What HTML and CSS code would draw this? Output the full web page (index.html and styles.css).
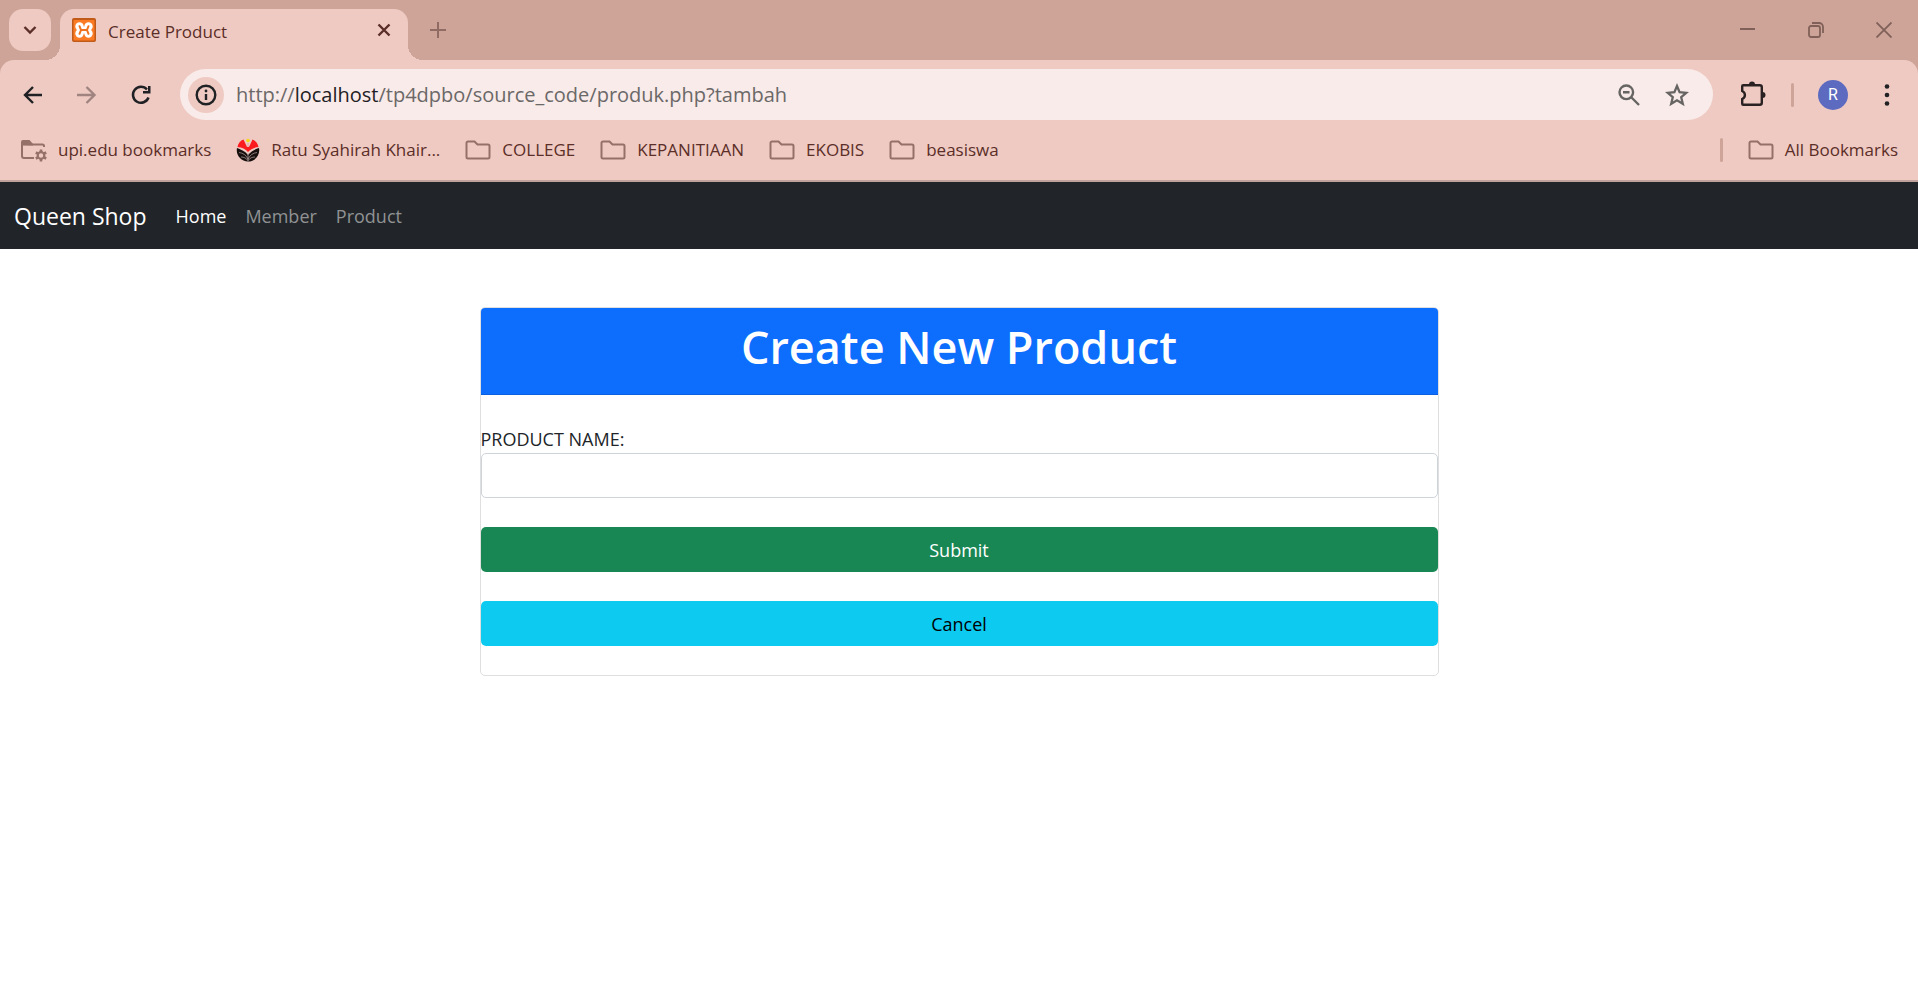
FILE: index.html
```html
<!DOCTYPE html>
<html lang="en">
<head>
<meta charset="utf-8">
<title>Create Product</title>
<link rel="stylesheet" href="styles.css">
</head>
<body>
<header class="browser">
  <div class="tabstrip">
    <button class="tab-search" aria-label="Search tabs"><svg width="14" height="10" viewBox="0 0 14 10"><path d="M1.500 2L7 7.500 12.500 2" fill="none" stroke="#5b2e28" stroke-width="2.400"/></svg></button>
    <div class="tab">
      <svg width="24" height="24" viewBox="0 0 24 24"><rect width="24" height="24" rx="2" fill="#c05a16"/><rect x="1.500" y="2" width="21" height="20.500" rx="1" fill="#fb7a24"/><g fill="#fff"><circle cx="7.500" cy="8.500" r="4.200"/><circle cx="16.500" cy="8.500" r="4.200"/><circle cx="7.500" cy="15.500" r="4.200"/><circle cx="16.500" cy="15.500" r="4.200"/><path d="M5 8.500h14v7H5Z"/></g><path d="M7.500 8.200L9 12l-1.500 3.800M16.500 8.200L15 12l1.500 3.800M9 12h6" fill="none" stroke="#f0741f" stroke-width="2" stroke-linecap="round"/></svg>
      <span class="tab-title">Create Product</span>
      <button aria-label="Close tab"><svg width="14" height="14" viewBox="0 0 14 14"><path d="M1.500 1.500l11 11M12.500 1.500l-11 11" stroke="#5b2e28" stroke-width="2.400"/></svg></button>
    </div>
    <button class="new-tab" aria-label="New tab"><svg width="16" height="16" viewBox="0 0 16 16"><path d="M8 0v16M0 8h16" stroke="#8f6b63" stroke-width="2"/></svg></button>
    <div class="window-controls">
      <button aria-label="Minimize"><svg width="16" height="16" viewBox="0 0 16 16"><path d="M0 7h15" stroke="#806058" stroke-width="2"/></svg></button>
      <button aria-label="Restore"><svg width="16" height="16" viewBox="0 0 16 16"><g fill="none" stroke="#806058" stroke-width="1.800"><rect x="1" y="4" width="11" height="11" rx="2"/><path d="M4 1h7a4 4 0 0 1 4 4v6"/></g></svg></button>
      <button aria-label="Close"><svg width="16" height="16" viewBox="0 0 16 16"><path d="M.5.5l15 15M15.500.5l-15 15" stroke="#806058" stroke-width="1.800"/></svg></button>
    </div>
  </div>
  <div class="toolbar">
    <button class="tool" aria-label="Back"><svg width="20" height="18" viewBox="0 0 20 18"><path d="M19 9H2M10 1L2 9l8 8" fill="none" stroke="#1f2124" stroke-width="2.400"/></svg></button>
    <button class="tool" aria-label="Forward"><svg width="20" height="18" viewBox="0 0 20 18"><path d="M0 9h17M9.500 1l8 8-8 8" fill="none" stroke="#a08480" stroke-width="2.400"/></svg></button>
    <button class="tool" aria-label="Reload"><svg width="20" height="20" viewBox="0 0 20 20"><path d="M17.500 12.500A8 8 0 1 1 16 4.500" fill="none" stroke="#1f2124" stroke-width="2.500"/><path d="M19.500 1v7.500h-7.500V6H17V1Z" fill="#1f2124"/></svg></button>
    <div class="omnibox">
      <button class="site-info" aria-label="View site information"><svg width="22" height="22" viewBox="0 0 22 22"><circle cx="11" cy="11" r="9.300" fill="none" stroke="#1f2124" stroke-width="2.400"/><path d="M11 10v6" stroke="#1f2124" stroke-width="2.400"/><circle cx="11" cy="7" r="1.400" fill="#1f2124"/></svg></button>
      <span class="url">http://<span class="host">localhost</span>/tp4dpbo/source_code/produk.php?tambah</span>
      <button class="omni-action" aria-label="Zoom"><svg width="22" height="22" viewBox="0 0 22 22"><g fill="none" stroke="#666563" stroke-width="2.400"><circle cx="8.300" cy="8.300" r="6.800"/><path d="M13 13l8 8M5 8.300h6.500"/></g></svg></button>
      <button class="omni-action" aria-label="Bookmark this tab"><svg width="24" height="24" viewBox="0 0 24 24"><path d="M12 3l2.600 6.200 6.700.6-5.100 4.400 1.600 6.600L12 17.300l-5.800 3.500 1.600-6.600-5.100-4.400 6.700-.6Z" fill="none" stroke="#666563" stroke-width="2.300"/></svg></button>
    </div>
    <button class="tool extensions" aria-label="Extensions"><svg width="28" height="28" viewBox="0 0 28 28"><path d="M5.200 4.200h16.600a2 2 0 0 1 2 2v15.600a2 2 0 0 1-2 2H5.200a1 1 0 0 1-1-1V18c3.600-1.600 3.600-6.400 0-8V5.200a1 1 0 0 1 1-1Z" fill="none" stroke="#2a2222" stroke-width="2.400"/><path d="M11 3.500a3 3 0 0 1 6 0ZM24.500 11a3 3 0 0 1 0 6Z" fill="#2a2222"/></svg></button>
    <span class="divider"></span>
    <button class="avatar" aria-label="Profile">R</button>
    <button class="menu" aria-label="Menu"><svg width="6" height="22" viewBox="0 0 6 22"><g fill="#1f2124"><circle cx="3" cy="2.500" r="2.300"/><circle cx="3" cy="11" r="2.300"/><circle cx="3" cy="19.500" r="2.300"/></g></svg></button>
  </div>
  <nav class="bookmarks" aria-label="Bookmarks">
    <a href="#"><svg width="27" height="24" viewBox="0 0 27 24"><path d="M14 20H4a2 2 0 0 1-2-2V5M24 9V8a1.500 1.500 0 0 0-1.500-1.500H2" fill="none" stroke="#947069" stroke-width="2"/><path d="M1 7V4a2 2 0 0 1 2-2h6.500l3.500 4v1.500Z" fill="#947069"/><circle cx="21" cy="17.500" r="3.300" fill="none" stroke="#947069" stroke-width="2.200"/><path d="M21 11.500v2.500M21 21v2.500M15.800 14.500l2.200 1.200M24 19.300l2.200 1.200M26.200 14.500L24 15.700M18 19.300l-2.200 1.200" stroke="#947069" stroke-width="2.600"/></svg>upi.edu bookmarks</a>
    <a href="#"><svg width="24" height="24" viewBox="0 0 24 24"><path d="M1 10C4 11 9 13 12 17c3-4 8-6 11-7 1.500 7-4 13.500-11 13.500S-.5 17 1 10Z" fill="#17100f"/><path d="M1.500 9C2 5.500 4.500 2.500 7.500 1.500L11 9h2l3.500-7.500c3 1 5.500 4 6 7.500C18 9.500 14.500 11 12 14 9.500 11 6 9.500 1.500 9Z" fill="#fb1a1e"/><path d="M12 5v4" stroke="#e8b7b0" stroke-width="2"/><circle cx="12" cy="2.500" r="1.800" fill="#f5d913"/><path d="M3 14.500c4 .5 7 2.500 9 6.500 2-4 5-6 9-6.500M5 19c3 0 5 1 7 3.500 2-2.500 4-3.500 7-3.500M12 15v8" fill="none" stroke="#b9a5a2" stroke-width=".7"/></svg>Ratu Syahirah Khair...</a>
    <a href="#"><svg width="26" height="20" viewBox="0 0 26 20"><path id="folder" d="M3 1.500h6.500l3 3H23A1.500 1.500 0 0 1 24.500 6v11a1.500 1.500 0 0 1-1.500 1.500H3A1.500 1.500 0 0 1 1.500 17V3A1.500 1.500 0 0 1 3 1.500Z" fill="none" stroke="#947069" stroke-width="2"/></svg>COLLEGE</a>
    <a href="#"><svg width="26" height="20" viewBox="0 0 26 20"><use href="#folder"/></svg>KEPANITIAAN</a>
    <a href="#"><svg width="26" height="20" viewBox="0 0 26 20"><use href="#folder"/></svg>EKOBIS</a>
    <a href="#"><svg width="26" height="20" viewBox="0 0 26 20"><use href="#folder"/></svg>beasiswa</a>
    <span class="divider push"></span>
    <a href="#"><svg width="26" height="20" viewBox="0 0 26 20"><use href="#folder"/></svg>All Bookmarks</a>
  </nav>
</header>
<nav class="navbar" aria-label="Main">
  <a class="brand" href="#">Queen Shop</a>
  <a class="active" href="#">Home</a>
  <a href="#">Member</a>
  <a href="#">Product</a>
</nav>
<main>
  <form class="card">
    <h1 class="card-header">Create New Product</h1>
    <label for="name">PRODUCT NAME:</label>
    <input class="field" id="name" type="text">
    <button class="btn submit" type="button">Submit</button>
    <button class="btn cancel" type="button">Cancel</button>
  </form>
</main>
</body>
</html>
```

FILE: styles.css
```css
* { box-sizing: border-box; }
body { margin: 0; background: #fff; color: #212529; font: 18px/28px "Open Sans", sans-serif; }
button, input { font: inherit; color: inherit; border: 0; padding: 0; background: none; }
a { color: inherit; text-decoration: none; }
svg { display: block; flex: none; }

/* Browser frame */
.browser { background: #cda497; color: #5b2e28; border-bottom: 2px solid #c1a19b; }
.tabstrip { display: flex; height: 60px; padding-top: 9px; }
.tab-search { display: grid; place-items: center; width: 42px; height: 42px; margin: 0 9px; border-radius: 14px; background: #efcac2; }
.tab { position: relative; display: flex; align-items: center; width: 348px; padding: 0 17px 9px 12px; border-radius: 14px 14px 0 0; background: #efcac2; }
.tab::before, .tab::after { content: ""; position: absolute; bottom: 0; width: 15px; height: 15px; }
.tab::before { right: 100%; background: radial-gradient(circle at 0 0, transparent 15px, #efcac2 15px); }
.tab::after { left: 100%; background: radial-gradient(circle at 100% 0, transparent 15px, #efcac2 15px); }
.tab-title { flex: 1; margin-left: 12px; padding-top: 3px; font-size: 17px; }
.new-tab { display: grid; place-items: center; width: 60px; height: 42px; }
.window-controls { display: flex; height: 42px; margin-left: auto; }
.window-controls button { display: grid; place-items: center; width: 68px; }

.toolbar { display: flex; align-items: center; height: 60px; padding: 9px 16px 0 6px; border-radius: 14px 14px 0 0; background: #efcac2; }
.tool { display: grid; place-items: center; width: 54px; height: 48px; }
.omnibox { flex: 1; display: flex; align-items: center; height: 51px; margin: 0 12px; padding: 0 12px 0 8px; border-radius: 26px; background: #f9ebe9; }
.site-info { display: grid; place-items: center; width: 36px; height: 36px; border-radius: 50%; background: #efcac2; }
.url { flex: 1; margin-left: 12px; font-size: 20px; color: #6b6868; }
.host { color: #1f2124; }
.omni-action { display: grid; place-items: center; width: 48px; height: 48px; }
.divider { width: 3px; height: 24px; border-radius: 2px; background: #cda497; }
.toolbar .divider { margin: 0 24px 0 12px; }
.avatar { width: 30px; height: 30px; border-radius: 50%; background: #5c6bc0; color: #fff; font: 16px/30px Roboto, sans-serif; }
.menu { display: grid; place-items: center; width: 30px; height: 48px; margin-left: 24px; }

.bookmarks { display: flex; align-items: center; gap: 25px; height: 60px; padding: 0 20px; background: #efcac2; font-size: 17px; }
.bookmarks a { display: flex; align-items: center; gap: 11px; }
.push { margin-left: auto; }

/* Shop page */
.navbar { display: flex; align-items: center; gap: 19px; height: 67px; padding: 0 14px; background: #212529; color: #909294; }
.brand { margin-right: 10px; font-size: 23px; color: #fff; }
.active { color: #fff; }
.card { display: flex; flex-direction: column; width: 50%; margin: 58px auto; border: 1px solid #dfdfdf; border-radius: 5px; }
.card-header { margin: 0 0 30px; padding: 6px 10px 14px; border-bottom: 1px solid #0b60df; border-radius: 4px 4px 0 0; text-align: center; color: #fff; background: #0d6efd; font: 600 45px/66px "Open Sans", sans-serif; }
.field { height: 45px; padding: 0 14px; border: 1px solid #ced4da; border-radius: 5px; }
.btn { height: 45px; margin-top: 29px; border-radius: 5px; text-align: center; }
.submit { background: #198754; color: #fff; }
.cancel { margin-bottom: 29px; background: #0dcaf0; color: #000; }
```
